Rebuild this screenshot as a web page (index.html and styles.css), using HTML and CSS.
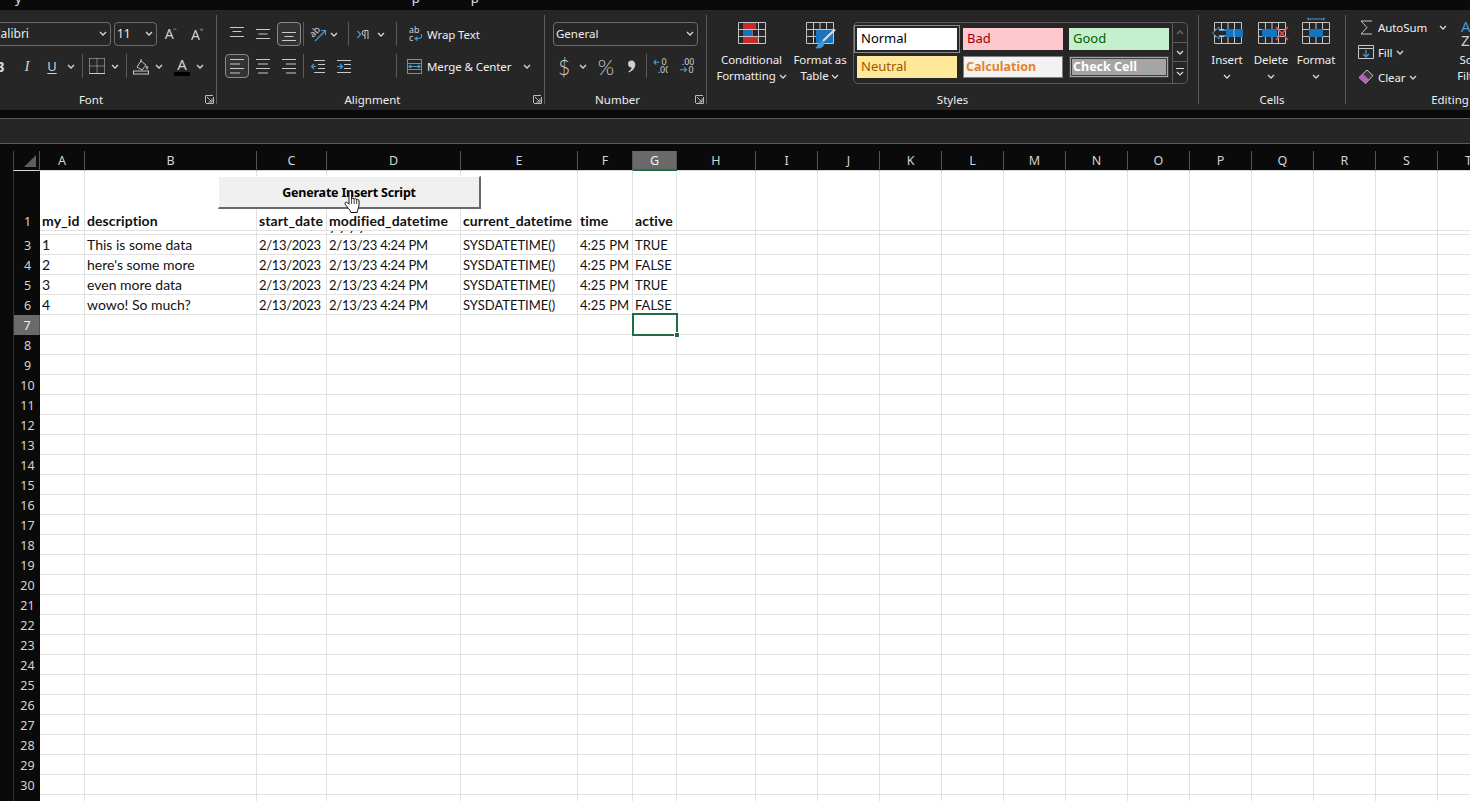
FILE: index.html
```html
<!DOCTYPE html>
<html lang="en">
<head>
<meta charset="utf-8">
<title>Workbook</title>
<link rel="stylesheet" href="styles.css">
</head>
<body>
<svg class="sprite" aria-hidden="true">
  <symbol id="chev" viewBox="0 0 8 5"><path d="M1 1l3 3 3-3" fill="none" stroke="#d8d8d8" stroke-width="1.3"/></symbol>
  <symbol id="launch" viewBox="0 0 9 9"><path d="M.5 8V.5H8M2 2l5 5M7 3.5V7H3.5M1 8.5h7.5V2" fill="none" stroke="#b8b8b8"/></symbol>
  <symbol id="grid" viewBox="0 0 28 22"><path d="M.5.5h27v21H.5zM.5 7.5h27M.5 14.5h27M7.5.5v21M14 .5v21M20.5.5v21" fill="none" stroke="#c4c4c4"/></symbol>
</svg>

<div class="titlestrip"><span class="f1">y</span><span class="f2">p</span><span class="f3">p</span></div>

<div class="ribbon">
  <section class="group g-font">
    <div class="body">
      <div class="row">
        <div class="combo combo-font m8"><span>Calibri</span><svg class="ch"><use href="#chev"/></svg></div>
        <div class="combo combo-size m3"><span>11</span><svg class="ch"><use href="#chev"/></svg></div>
        <span class="t w14 m7"><svg class="ic" width="18" height="18" viewBox="0 0 18 18"><text x="1" y="16" class="glyph-a big">A</text><path d="M12 4l2-2 2 2" class="bl"/></svg></span>
        <span class="t w14 m13"><svg class="ic" width="16" height="16" viewBox="0 0 16 16"><text x="0" y="15" class="glyph-a">A</text><path d="M10 2l2 2 2-2" class="bl"/></svg></span>
      </div>
      <div class="row">
        <span class="t w16 m10 b-glyph">B</span>
        <span class="t w20 m9 i-glyph">I</span>
        <span class="t w20 m5 u-glyph">U</span>
        <span class="t w18"><svg class="ch"><use href="#chev"/></svg></span>
        <i class="sep m2"></i>
        <span class="t w16 m6"><svg width="16" height="16" viewBox="0 0 16 16"><path d="M.5.5h15M.5 8h15M8 .5v15M.5.5v15M15.500.5v15" class="dot"/><path d="M0 15.500h16" class="ln"/></svg></span>
        <span class="t w14 m3"><svg class="ch"><use href="#chev"/></svg></span>
        <i class="sep m4"></i>
        <span class="t w16 m6"><svg width="16" height="17" viewBox="0 0 16 17"><path d="M4 9l4-6 5 4-4 5zM8 1v3M14 8c1 2 1 3 0 3s-1-1 0-3z" class="ln"/><rect x=".5" y="13" width="15" height="3" class="ln"/></svg></span>
        <span class="t w14 m3"><svg class="ch"><use href="#chev"/></svg></span>
        <span class="t w16 m8 colour-a">A</span>
        <span class="t w14 m3"><svg class="ch"><use href="#chev"/></svg></span>
      </div>
    </div>
    <div class="lab pad-launch">Font<svg class="launcher"><use href="#launch"/></svg></div>
  </section>

  <section class="group g-align">
    <div class="body">
      <div class="row">
        <span class="t w14 m13"><svg class="hi" width="14" height="11" viewBox="0 0 14 11"><path d="M0 .5h14M2.500 4.500h9M0 9.500h14" class="ln"/></svg></span>
        <span class="t w14 m12"><svg width="14" height="11" viewBox="0 0 14 11"><path d="M0 .5h14M2.500 5h9M0 9.500h14" class="ln"/></svg></span>
        <span class="t w24 m7 on"><svg class="low" width="14" height="10" viewBox="0 0 14 10"><path d="M0 .5h14M2.500 4.500h9M0 8.500h14" class="ln"/></svg></span>
        <i class="sep m2"></i>
        <span class="t w16 m6"><svg width="16" height="16" viewBox="0 0 16 16"><g transform="rotate(-45 5 7)"><text x="0" y="9" class="mini">ab</text></g><path d="M5 15L15 5M11 4.500h4.500V9" class="bl"/></svg></span>
        <span class="t w14 m1"><svg class="ch"><use href="#chev"/></svg></span>
        <i class="sep m7"></i>
        <span class="t w12 m8"><svg width="12" height="9" viewBox="0 0 12 9"><path d="M.5 1l3 3.500-3 3.500" class="bl"/><path d="M8 .5V9M11 .5V9M11 .5H7.500a2.500 2.500 0 0 0 0 5H8" class="ln"/></svg></span>
        <span class="t w14 m5"><svg class="ch"><use href="#chev"/></svg></span>
        <i class="sep m8"></i>
        <span class="t w14 m12"><svg width="15" height="16" viewBox="0 0 15 16"><text x="0" y="7" class="mini">ab</text><text x="0" y="15" class="mini">c</text><path d="M13 8c2 4-1 5-6 5M9 11l-2.500 2 2.500 2" class="bl"/></svg></span>
        <span class="txt m4">Wrap Text</span>
      </div>
      <div class="row">
        <span class="t w24 m8 on"><svg width="16" height="15" viewBox="0 0 16 15"><path d="M1 .5h14M1 5h10M1 9.500h14M1 14h10" class="ln"/></svg></span>
        <span class="t w14 m7"><svg width="14" height="15" viewBox="0 0 14 15"><path d="M0 .5h14M2 5h10M0 9.500h14M2 14h10" class="ln"/></svg></span>
        <span class="t w14 m12"><svg width="14" height="15" viewBox="0 0 14 15"><path d="M0 .5h14M4 5h10M0 9.500h14M4 14h10" class="ln"/></svg></span>
        <i class="sep m7"></i>
        <span class="t w14 m7"><svg width="14" height="13" viewBox="0 0 14 13"><path d="M3 .5h11M7 4.500h7M7 8.500h7M3 12.500h11" class="ln"/><path d="M5 6.500H.5M3 4L.5 6.500 3 9" class="bl"/></svg></span>
        <span class="t w14 m12"><svg width="14" height="13" viewBox="0 0 14 13"><path d="M0 .5h14M7 4.500h7M7 8.500h7M0 12.500h14" class="ln"/><path d="M0 6.500h5M3 4l2.500 2.500L3 9" class="bl"/></svg></span>
        <i class="sep m45"></i>
        <span class="t w15 m10"><svg width="15" height="15" viewBox="0 0 15 15"><rect x=".5" y=".5" width="14" height="14" class="ln-blue"/><path d="M.5 4.500h14M.5 10.500h14" class="ln-blue"/><path d="M2 7.500h11M4 6L2 7.500 4 9M11 6l2 1.500L11 9" class="bl"/></svg></span>
        <span class="txt m5 merge">Merge &amp; Center</span>
        <span class="t w14 m8"><svg class="ch"><use href="#chev"/></svg></span>
      </div>
    </div>
    <div class="lab pad-launch">Alignment<svg class="launcher"><use href="#launch"/></svg></div>
  </section>

  <section class="group g-number">
    <div class="body">
      <div class="row">
        <div class="combo combo-num m8"><span>General</span><svg class="ch"><use href="#chev"/></svg></div>
      </div>
      <div class="row">
        <span class="t w16 m11 sym">$</span>
        <span class="t w14 m4"><svg class="ch"><use href="#chev"/></svg></span>
        <span class="t w16 m8 sym">%</span>
        <span class="t w16 m9"><svg width="9" height="13" viewBox="0 0 9 13"><path d="M1 3.500C1 1.500 2.800.5 4.500.5 6.800.5 8.300 2.200 8.300 4.500c0 3.500-2.800 6.500-6.300 8l-.7-1c1.800-1 3-2.300 3.400-4C2.500 7.700 1 6 1 3.500z" fill="#d0d0d0"/></svg></span>
        <i class="sep m7"></i>
        <span class="t w15 m6"><svg width="16" height="16" viewBox="0 0 16 16"><text x="9" y="7" class="mini">0</text><text x="5" y="15" class="mini">.00</text><path d="M7 4H1M3.500 1.500L1 4l2.500 2.500" class="bl"/></svg></span>
        <span class="t w15 m11"><svg width="16" height="16" viewBox="0 0 16 16"><text x="3" y="7" class="mini">.00</text><text x="10" y="15" class="mini">0</text><path d="M1 12h7M5.500 9.500L8 12l-2.500 2.500" class="bl"/></svg></span>
      </div>
    </div>
    <div class="lab pad-launch">Number<svg class="launcher"><use href="#launch"/></svg></div>
  </section>

  <section class="group g-styles">
    <div class="body body-row">
      <button class="big w69 m10">
        <span class="bigicon"><svg width="28" height="22" viewBox="0 0 28 22"><use href="#grid"/><path d="M5 1h13v6H5zM5 15h15v6H5z" fill="#cc2a27"/><path d="M5 8h9v6H5z" fill="#1374c0"/></svg></span>
        <span class="bigtext">Conditional<br>Formatting <svg class="ch"><use href="#chev"/></svg></span>
      </button>
      <button class="big w52 m8">
        <span class="bigicon"><svg width="31" height="27" viewBox="0 0 31 27"><g transform="translate(1)"><use href="#grid" width="28" height="22"/></g><path d="M11 8h17v13H11z" fill="#1a75bd"/><path d="M30 7.500L18 19" stroke="#dcdcdc" stroke-width="2.200" fill="none"/><path d="M10 26c3-1 3-7 7-7 2 0 3 2 2 4-1 3-6 4-9 3z" fill="#3f97d8"/></svg></span>
        <span class="bigtext">Format as<br>Table <svg class="ch"><use href="#chev"/></svg></span>
      </button>
      <div class="gallery m7">
        <div class="swatches">
          <div class="sw s-normal">Normal</div>
          <div class="sw s-bad">Bad</div>
          <div class="sw s-good">Good</div>
          <div class="sw s-neutral">Neutral</div>
          <div class="sw s-calc">Calculation</div>
          <div class="sw s-check">Check Cell</div>
        </div>
        <div class="scroller">
          <span class="sb sb1"><svg class="ch up"><use href="#chev"/></svg></span>
          <span class="sb sb2"><svg class="ch"><use href="#chev"/></svg></span>
          <span class="sb sb3"><svg width="8" height="9" viewBox="0 0 8 9"><path d="M0 .5h8M1 4l3 3 3-3" fill="none" stroke="#d8d8d8" stroke-width="1.200"/></svg></span>
        </div>
      </div>
    </div>
    <div class="lab">Styles</div>
  </section>

  <section class="group g-cells">
    <div class="body body-row">
      <button class="big w44 m6">
        <span class="bigicon"><svg width="33" height="22" viewBox="0 0 33 22"><g transform="translate(3)"><use href="#grid" width="28" height="22"/></g><path d="M13 7h19v8H13z" fill="#1374c0"/><path d="M23 7v8" stroke="#8cc0e8"/><path d="M15 8.500H8V5l-6.500 6L8 17v-3.500h7" fill="#262626" stroke="#4a9ad4"/></svg></span>
        <span class="bigtext one">Insert<br><svg class="ch"><use href="#chev"/></svg></span>
      </button>
      <button class="big w44">
        <span class="bigicon"><svg width="34" height="22" viewBox="0 0 34 22"><g transform="translate(4)"><use href="#grid" width="28" height="22"/></g><path d="M8 7h15v8H8z" fill="#1374c0"/><path d="M22 5l12 13M34 5L22 18" stroke="#e0504a" stroke-width="1.500" fill="none"/></svg></span>
        <span class="bigtext one">Delete<br><svg class="ch"><use href="#chev"/></svg></span>
      </button>
      <button class="big w44 m1">
        <span class="bigicon tall"><svg width="28" height="27" viewBox="0 0 28 27"><path d="M6 2h16M6 .5v3M22 .5v3" stroke="#4a9ad4" fill="none"/><g transform="translate(0 5)"><use href="#grid" width="28" height="22"/></g><path d="M7 12h14v8H7z" fill="#1374c0"/></svg></span>
        <span class="bigtext one">Format<br><svg class="ch"><use href="#chev"/></svg></span>
      </button>
    </div>
    <div class="lab">Cells</div>
  </section>

  <section class="group g-edit">
    <div class="body body-row">
      <div class="editcol">
        <div class="erow">
          <span class="t w16 m12"><svg width="13" height="15" viewBox="0 0 13 15"><path d="M12 1H1l6 6.500L1 14h11" fill="none" stroke="#c8c8c8"/></svg></span>
          <span class="txt m4 w50">AutoSum</span>
          <span class="t w14 m8"><svg class="ch"><use href="#chev"/></svg></span>
        </div>
        <div class="erow">
          <span class="t w16 m12"><svg width="16" height="14" viewBox="0 0 16 14"><path d="M.5 3.500v10h15v-10M.5.500h15v3H.5z" class="ln"/><path d="M8 5v7M5 9l3 3 3-3" class="bl"/></svg></span>
          <span class="txt m4">Fill</span>
          <span class="t w14 m1"><svg class="ch"><use href="#chev"/></svg></span>
        </div>
        <div class="erow">
          <span class="t w16 m12"><svg width="16" height="16" viewBox="0 0 16 16"><path d="M1 8.500L9 1l6 5.500-7.500 8z" fill="#3a3a3a" stroke="#c8c8c8"/><path d="M1 8.500l4-3.500 6 5.500-3.500 4z" fill="#b85fc0"/></svg></span>
          <span class="txt m4">Clear</span>
          <span class="t w14 m1"><svg class="ch"><use href="#chev"/></svg></span>
        </div>
      </div>
      <button class="big w44 sortbtn">
        <span class="bigicon"><svg width="44" height="28" viewBox="0 0 44 28"><text x="7" y="10" class="az-a">A</text><text x="7" y="24" class="az-z">Z</text></svg></span>
        <span class="bigtext">Sort &amp;<br>Filter <svg class="ch"><use href="#chev"/></svg></span>
      </button>
    </div>
    <div class="lab">Editing</div>
  </section>
</div>

<div class="gap-bar"></div>
<div class="formula-bar"></div>
<div class="gap-thin"></div>

<main class="sheet">
  <div id="cells" class="cells"></div>
  <div class="vba-button">Generate Insert Script</div>
  <svg class="hand" width="18" height="24" viewBox="0 0 18 24"><path d="M5 2.200c0-1.600 2.600-1.600 2.600 0V9c.4-1.300 2.500-1.200 2.600.3.400-1 2.300-.9 2.500.5.500-.7 2.200-.5 2.300 1 .2 3 0 5.500-.8 7.700-.4 1.300-.9 2.500-1 4H6.800c-.3-1.600-1.200-2.800-2.400-4.100L1.200 14.300c-1-1.500 1-2.900 2.300-1.600L5 14.200z" fill="#fff" stroke="#111"/><path d="M7.600 9v5M10.200 9.300V14M12.700 9.800V14" fill="none" stroke="#111" stroke-width=".8"/></svg>
  <div class="selection"><i class="handle"></i></div>
</main>
<script src="script.js"></script>
</body>
</html>
```
FILE: styles.css
```css
* { box-sizing: border-box; }
html, body { margin: 0; height: 100%; overflow: hidden; background: #fff; }
body { width: 1470px; height: 801px; font-family: "Noto Sans", "Open Sans", sans-serif; color: #efefef; }
.sprite { display: none; }

.titlestrip { height: 10px; background: #0a0a0a; display: flex; overflow: hidden; color: #e0e0e0; font-size: 13px; line-height: 10px; }
.titlestrip span { margin-top: -7px; height: 17px; }
.f1 { margin-left: 15px; }
.f2 { margin-left: 390px; }
.f3 { margin-left: 51px; }

.ribbon { height: 100px; background: #262626; display: flex; padding-top: 5px; font-size: 12px; }
.group { height: 89px; padding-top: 7px; border-right: 1px solid #5c5c5c; flex: none; display: flex; flex-direction: column; position: relative; }
.g-font { width: 235px; margin-left: -18px; }
.g-align { width: 328px; }
.g-number { width: 162px; }
.g-styles { width: 492px; }
.g-cells { width: 147px; }
.g-edit { width: 208px; border-right: 0; }
.body { height: 70px; flex: none; display: flex; flex-direction: column; gap: 8px; }
.body-row { flex-direction: row; gap: 0; }
.row { display: flex; align-items: center; height: 24px; flex: none; }
.lab { height: 16px; line-height: 16px; text-align: center; color: #eee; font-size: 11.500px; position: relative; flex: none; }
.pad-launch { padding-right: 16px; }
.launcher { position: absolute; right: 2px; top: 3px; width: 9px; height: 9px; }

.t { display: flex; align-items: center; justify-content: center; flex: none; height: 24px; }
.w12 { width: 12px; } .w14 { width: 14px; } .w15 { width: 15px; } .w16 { width: 16px; } .w18 { width: 18px; } .w20 { width: 20px; } .w24 { width: 24px; }
.w44 { width: 44px; } .w50 { width: 50px; } .w52 { width: 52px; } .w69 { width: 69px; }
.m1 { margin-left: 1px; } .m2 { margin-left: 2px; } .m3 { margin-left: 3px; } .m4 { margin-left: 4px; } .m5 { margin-left: 5px; } .m6 { margin-left: 6px; } .m7 { margin-left: 7px; } .m8 { margin-left: 8px; } .m9 { margin-left: 9px; } .m10 { margin-left: 10px; } .m11 { margin-left: 11px; } .m12 { margin-left: 12px; } .m13 { margin-left: 13px; } .m45 { margin-left: 45px; }
.sep { display: block; width: 1px; height: 24px; background: #5c5c5c; flex: none; }
.ch { width: 8px; height: 5px; flex: none; }
.up { transform: scaleY(-1); opacity: .4; }
.txt { font-size: 11.500px; white-space: nowrap; flex: none; letter-spacing: -.1px; }
.merge { width: 85px; }
.on { border: 1px solid #8a8a8a; border-radius: 4px; background: #333; }
.low { margin-top: 6px; }
.hi { margin-top: -3px; }

.ln { fill: none; stroke: #c8c8c8; stroke-width: 1; }
.bl { fill: none; stroke: #4a9ad4; stroke-width: 1.200; }
.dot { fill: none; stroke: #c8c8c8; stroke-dasharray: 1 1; }
.ln-blue { fill: none; stroke: #4a9ad4; }
.mini { font: 9.500px "Noto Sans", sans-serif; fill: #d0d0d0; }
.glyph-a { font: 16px "Noto Sans", sans-serif; fill: #d0d0d0; }
.glyph-a.big { font-size: 18px; }
.b-glyph { font: bold 14px "Noto Sans", sans-serif; color: #d8d8d8; }
.i-glyph { font: italic 15px "Liberation Serif", serif; color: #d0d0d0; }
.u-glyph { font-size: 13px; color: #d0d0d0; text-decoration: underline; text-underline-offset: 2px; }
.colour-a { font-size: 15px; color: #d0d0d0; border-bottom: 4px solid #000; height: 19px; line-height: 15px; align-self: flex-start; margin-top: 3px; }
.sym { font-family: Lato, sans-serif; font-weight: 300; font-size: 21px; color: #cfcfcf; }

.combo { height: 24px; border: 1px solid #6c6c6c; border-radius: 4px; display: flex; align-items: center; justify-content: space-between; padding: 0 3px 2px 2px; font-size: 12px; flex: none; color: #ededed; }
.combo-font { width: 121px; }
.combo-size { width: 43px; }
.combo-num { width: 145px; font-size: 11.500px; }

.big { background: none; border: 0; padding: 0; color: #efefef; font: inherit; font-size: 11.500px; letter-spacing: -.1px; display: flex; flex-direction: column; align-items: center; flex: none; }
.bigicon { height: 30px; display: block; }
.bigicon svg { display: block; overflow: visible; }
.tall svg { margin-top: -5px; }
.bigtext { line-height: 16px; white-space: nowrap; text-align: center; display: block; }
.one .ch { margin-top: 5px; }
.bigtext .ch { vertical-align: 1px; }
.bigtext.one svg { display: inline-block; }

.gallery { width: 335px; height: 62px; border: 1px solid #5c5c5c; border-radius: 5px; display: flex; flex: none; }
.swatches { display: grid; grid-template-columns: repeat(3, 100px); grid-auto-rows: 22px; gap: 6px; padding: 5px 0 0 3px; }
.sw { font-size: 13px; line-height: 20px; padding-left: 4px; white-space: nowrap; font-family: "Noto Sans", sans-serif; }
.s-normal { background: #fff; color: #000; box-shadow: 0 0 0 2px #262626, 0 0 0 3px #8a8a8a; }
.s-bad { background: #ffc7ce; color: #9c0006; }
.s-good { background: #c6efce; color: #006100; }
.s-neutral { background: #ffe899; color: #9c5700; }
.s-calc { background: #f2f2f2; color: #e8822a; font-weight: 700; font-size: 12.500px; border: 1px solid #7f7f7f; line-height: 20px; padding-left: 2px; }
.s-check { background: #a5a5a5; color: #fff; font-weight: 700; font-size: 12.500px; border: 3px double #3f3f3f; line-height: 16px; padding-left: 1px; }
.scroller { margin-left: 3px; flex: 1; border-left: 1px solid #5c5c5c; display: flex; flex-direction: column; }
.sb { display: flex; align-items: center; justify-content: center; border-bottom: 1px solid #5c5c5c; }
.sb1 { height: 20px; } .sb2 { height: 19px; } .sb3 { flex: 1; border-bottom: 0; }

.editcol { width: 108px; margin-top: -4px; display: flex; flex-direction: column; gap: 7px; flex: none; }
.erow { height: 18px; display: flex; align-items: center; }
.erow .t { height: 18px; }
.az-a { font: 15px "Noto Sans", sans-serif; fill: #4a9ad4; }
.az-z { font: 15px "Noto Sans", sans-serif; fill: #d0d0d0; }

.gap-bar { height: 8px; background: #0a0a0a; }
.formula-bar { height: 26px; background: #262626; border-top: 1px solid #5c5c5c; border-bottom: 1px solid #5c5c5c; }
.gap-thin { height: 7px; background: #0a0a0a; }

.sheet { position: relative; height: 650px; background: #fff; overflow: hidden; }
.cells { display: grid; width: 1513px; padding-left: 13px; background: linear-gradient(#0a0a0a, #0a0a0a) 0 0 / 14px 100% no-repeat;
  grid-template-columns: 27px 45px 172px 70px 134px 117px 55px 44px 79px repeat(12, 62px);
  grid-template-rows: 20px 60px 4px repeat(29, 20px); }
.c { border-right: 1px solid #e1e1e1; border-bottom: 1px solid #e1e1e1; padding: 0 2px; font-family: Lato, "Liberation Sans", sans-serif; font-size: 14px; color: #111; line-height: 19px; white-space: nowrap; overflow: hidden; background: #fff; }
.c-num { font-size: 13px; letter-spacing: -.3px; line-height: 21px; }
.c-datetime { font-size: 13px; letter-spacing: -.2px; line-height: 21px; }
.c-sm { font-size: 13px; line-height: 21px; }
.c-bold { font-weight: 700; display: flex; align-items: flex-end; line-height: 19px; letter-spacing: .1px; }
.c-bold.c-num, .c-bold.c-datetime, .c-bold.c-sm { font-size: 14px; letter-spacing: .1px; line-height: 19px; }
.c-clip { line-height: 3px; font-weight: 400; letter-spacing: 2.500px; }
.c-clip span { display: block; margin-top: -7px; }
.ch-col { background: #0a0a0a; color: #d4d4d4; font-size: 12.500px; text-align: center; line-height: 19px; border-bottom: 1px solid #d8d8d8; border-right: 1px solid #555; overflow: hidden; }
.ch-col.corner { border-left: 1px solid #444; position: relative; }
.corner::after { content: ""; position: absolute; right: 3px; bottom: 3px; border: 6px solid transparent; border-right-color: #5e5e5e; border-bottom-color: #5e5e5e; }
.ch-col.active { background: #6a6a6a; color: #f0f0f0; border-bottom: 2px solid #1f6e43; }
.rh { background: #0a0a0a; color: #d4d4d4; font-size: 12.500px; text-align: center; border-left: 1px solid #333; display: flex; align-items: center; justify-content: center; overflow: hidden; padding-left: 1px; }
.rh.bottom { align-items: flex-end; padding-bottom: 1px; }
.rh.active { background: #6a6a6a; color: #f0f0f0; border-right: 1px solid #1f6e43; }

.vba-button { position: absolute; left: 218px; top: 25px; width: 263px; height: 33px; background: #f0f0f0; border-top: 1px solid #fff; border-left: 1px solid #fff; border-right: 2px solid #696969; border-bottom: 2px solid #696969; color: #000; font: 700 12.500px/32px "Noto Sans", sans-serif; letter-spacing: -.2px; text-align: center; }
.hand { position: absolute; left: 344px; top: 39px; }
.selection { position: absolute; left: 632px; top: 162px; width: 46px; height: 23px; border: 2px solid #1f6e43; }
.handle { position: absolute; right: -4px; bottom: -4px; width: 6px; height: 6px; background: #1f6e43; border: 1px solid #fff; }
```
FILE: script.js
```js
var cols = ["A","B","C","D","E","F","G","H","I","J","K","L","M","N","O","P","Q","R","S","T"];
var colClass = ["", "", " c-num", " c-datetime", " c-sm", " c-sm", " c-sm"];
var rows = {
  1: ["my_id","description","start_date","modified_datetime","current_datetime","time","active"],
  3: ["1","This is some data","2/13/2023","2/13/23 4:24 PM","SYSDATETIME()","4:25 PM","TRUE"],
  4: ["2","here's some more","2/13/2023","2/13/23 4:24 PM","SYSDATETIME()","4:25 PM","FALSE"],
  5: ["3","even more data","2/13/2023","2/13/23 4:24 PM","SYSDATETIME()","4:25 PM","TRUE"],
  6: ["4","wowo! So much?","2/13/2023","2/13/23 4:24 PM","SYSDATETIME()","4:25 PM","FALSE"]
};
var root = document.getElementById("cells");
function add(cls, text) {
  var d = document.createElement("div");
  d.className = cls;
  if (text) d.textContent = text;
  root.appendChild(d);
  return d;
}
add("ch-col corner");
cols.forEach(function (c) { add("ch-col" + (c === "G" ? " active" : ""), c); });
for (var r = 1; r <= 31; r++) {
  var label = r === 2 ? "" : String(r);
  add("rh" + (r === 1 ? " bottom" : "") + (r === 7 ? " active" : ""), label);
  for (var i = 0; i < cols.length; i++) {
    var cls = "c" + (colClass[i] || "") + (r === 1 ? " c-bold" : "");
    if (r === 2) {
      var cell = add("c c-clip");
      if (i === 3) { var s = document.createElement("span"); s.textContent = "yyyy"; cell.appendChild(s); }
      continue;
    }
    var t = rows[r] ? rows[r][i] : "";
    if (r === 1 && t) {
      var b = add(cls);
      var sp = document.createElement("span");
      sp.textContent = t;
      b.appendChild(sp);
    } else {
      add(cls, t);
    }
  }
}
```
